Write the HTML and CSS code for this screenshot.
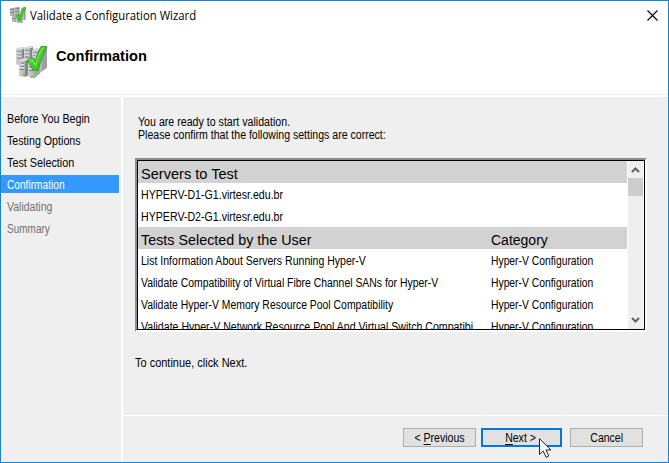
FILE: index.html
```html
<!DOCTYPE html>
<html lang="en">
<head>
<meta charset="utf-8">
<title>Validate a Configuration Wizard</title>
<link rel="stylesheet" href="styles.css">
</head>
<body>
<svg width="0" height="0" class="defs" aria-hidden="true">
  <defs>
    <linearGradient id="metal" x1="0" x2="1"><stop offset="0" stop-color="#cfd1d3"/><stop offset="1" stop-color="#a2a4a7"/></linearGradient>
    <linearGradient id="leaf" x1="0" y1="0" x2="1" y2="1"><stop offset="0" stop-color="#66dc42"/><stop offset="1" stop-color="#30b81f"/></linearGradient>
    <g id="tower">
      <path d="M0 2L5 0L9 1V16L6 18L0 17Z" fill="url(#metal)"/>
      <path d="M6 2.500L9 1V16L6 18Z" fill="#85888b"/>
      <path d="M0 2L4 0L9 1L6 2.500Z" fill="#dddfe0"/>
      <path d="M1 4.500L5 5M1 7.500L5 8M1 10.500L5 11" stroke="#74777a" stroke-width=".9"/>
      <path d="M1 5.500L5 6M1 8.500L5 9" stroke="#f4f5f6" stroke-width=".9"/>
    </g>
    <symbol id="servers" viewBox="0 0 32 32" preserveAspectRatio="none">
      <use href="#tower" x="1" y="1"/><use href="#tower" x="9" y="0"/><use href="#tower" x="17" y="2"/>
      <path d="M24 4L32 1V21L24 27Z" fill="#b5b7b9"/>
      <path d="M27 3L32 1V21L27 24Z" fill="#9c9fa2"/>
      <use href="#tower" x="4" y="12"/><use href="#tower" x="13" y="13"/>
      <path d="M19 16L25 13V27L19 31Z" fill="#a4a7ab"/>
      <path d="M8 28h2M16 30h2M23 24h2" stroke="#67d72c" stroke-width="2"/>
      <path d="M12.500 14L17.500 11L20.500 15.500Q22.500 6 26 .5H32Q26.500 10 23 23.500H18Z" fill="url(#leaf)" stroke="#249a16" stroke-width=".8"/>
      <path d="M14.500 14.200L17 13L20.500 18.500Q23.500 8 27.500 2" fill="none" stroke="#8aea68" stroke-width="1"/>
    </symbol>
    <symbol id="servers-small" viewBox="0 0 16 17">
      <path d="M0 1H4V9H0ZM5 0H9V9H5ZM11 1H15V13H11ZM2 9H6V15H2ZM7 9H12V16H7Z" fill="#b6b8ba"/>
      <path d="M4 1V9M9 0V9M15 1V13M6 10V15M12 13V16" stroke="#7f8285"/>
      <path d="M0 2.500H4M5 1.500H9M0 5.500H4M5 4.500H9M2 11.500H5M8 13.500H11" stroke="#777a7d" stroke-width=".8"/>
      <path d="M5.500 8.500L8 7L9.500 9.300Q11 4 13.500 .5H16Q12.500 5.500 10.800 13H8.800Z" fill="#42ce2a" stroke="#239c17" stroke-width=".6"/>
    </symbol>
  </defs>
</svg>
<div class="window">
  <header class="top">
    <div class="titlebar">
      <svg class="app-icon"><use href="#servers-small"/></svg>
      <div class="caption"><span>Validate a Configuration Wizard</span></div>
      <svg class="close" viewBox="0 0 11 11"><path d="M.5 .5L10.500 10.500M10.500 .5L.5 10.500"/></svg>
    </div>
    <div class="heading">
      <svg class="page-icon"><use href="#servers"/></svg>
      <h1><span>Confirmation</span></h1>
    </div>
  </header>
  <div class="body">
    <nav class="steps">
      <div class="step"><span class="s1">Before You Begin</span></div>
      <div class="step"><span class="s2">Testing Options</span></div>
      <div class="step"><span class="s3">Test Selection</span></div>
      <div class="step current"><span class="s4">Confirmation</span></div>
      <div class="step pending"><span class="s5">Validating</span></div>
      <div class="step pending"><span class="s6">Summary</span></div>
    </nav>
    <div class="main">
      <section class="content">
        <p class="intro"><span class="i1">You are ready to start validation.</span><br><span class="i2">Please confirm that the following settings are correct:</span></p>
        <div class="listbox">
          <div class="rows">
            <div class="row group"><div><span class="g1">Servers to Test</span></div></div>
            <div class="row"><div><span class="h">HYPERV-D1-G1.virtesr.edu.br</span></div></div>
            <div class="row"><div><span class="h">HYPERV-D2-G1.virtesr.edu.br</span></div></div>
            <div class="row group"><div><span class="g2">Tests Selected by the User</span></div><div><span class="g3">Category</span></div></div>
            <div class="row"><div><span class="t1">List Information About Servers Running Hyper-V</span></div><div><span class="c">Hyper-V Configuration</span></div></div>
            <div class="row"><div><span class="t2">Validate Compatibility of Virtual Fibre Channel SANs for Hyper-V</span></div><div><span class="c">Hyper-V Configuration</span></div></div>
            <div class="row"><div><span class="t3">Validate Hyper-V Memory Resource Pool Compatibility</span></div><div><span class="c">Hyper-V Configuration</span></div></div>
            <div class="row"><div><span class="t4">Validate Hyper-V Network Resource Pool And Virtual Switch Compatibi</span></div><div><span class="c">Hyper-V Configuration</span></div></div>
          </div>
          <div class="scrollbar">
            <svg class="arrow" viewBox="0 0 15 17"><path d="M4 11L7.500 7.500L11 11"/></svg>
            <div class="thumb"></div>
            <svg class="arrow down" viewBox="0 0 15 17"><path d="M4 6L7.500 9.500L11 6"/></svg>
          </div>
        </div>
        <p class="hint"><span>To continue, click Next.</span></p>
      </section>
      <footer class="buttons">
        <button class="btn"><span>&lt; <u>P</u>revious</span></button>
        <button class="btn next"><span><u>N</u>ext &gt;</span></button>
        <button class="btn cancel"><span>Cancel</span></button>
      </footer>
    </div>
  </div>
  <svg class="cursor" viewBox="0 0 13 20"><path d="M.5 .7V16.500L4.200 13L7.200 19.300L9.800 18L7 12H12Z"/></svg>
</div>
</body>
</html>
```
FILE: styles.css
```css
* { box-sizing: border-box; }
body { margin: 0; overflow: hidden; font: 12px/13px "Liberation Sans", Arial, sans-serif; color: #000; }
.defs { position: absolute; }
.window { position: relative; width: 669px; height: 463px; border: 1px solid #1883cb; background: #fff; display: flex; flex-direction: column; }
/* Narrow interface lettering */
span { display: inline-block; transform-origin: 0 50%; transform: scaleX(.878); white-space: nowrap; }
.top { height: 94px; border-bottom: 1px solid #efefef; }
.titlebar { display: flex; align-items: center; height: 30px; padding: 0 10px 0 9px; }
.app-icon { width: 16px; height: 17px; margin-bottom: 2px; }
.caption { flex: 1; margin-left: 4px; font: 12px/16px "Open Sans", "Noto Sans", sans-serif; }
.caption span { transform: scaleX(.943); }
.close { width: 11px; height: 11px; stroke: #000; stroke-width: 1.1; margin-bottom: 2px; }
.heading { display: flex; padding: 15px 0 0 14px; }
.page-icon { width: 32px; height: 33px; }
h1 { margin: 0 0 0 9px; font-size: 14px; line-height: 20px; }
h1 span { transform: scaleX(1.043); }
.body { flex: 1; display: flex; margin-top: 2px; min-height: 0; }
.steps { width: 122px; border-right: 2px solid #fff; background: #efefef; padding-top: 12px; }
.step { width: 118px; height: 18px; margin-bottom: 4px; padding-left: 6px; line-height: 20px; }
.s1 { transform: scaleX(.893); }
.s2 { transform: scaleX(.89); }
.s3 { transform: scaleX(.9); }
.s4 { transform: scaleX(.846); }
.s5 { transform: scaleX(.875); }
.s6 { transform: scaleX(.833); }
.current { background: #3399ff; color: #fff; }
.pending { color: #707070; }
.main { flex: 1; background: #efefef; display: flex; flex-direction: column; }
.content { height: 319px; border-bottom: 1px solid #fff; padding: 19px 0 0 12px; }
p { margin: 0; white-space: nowrap; }
.intro { padding-left: 3px; height: 42px; }
.i1 { transform: scaleX(.886); }
.i2 { transform: scaleX(.88); }
.listbox { width: 512px; height: 174px; border-style: solid; border-width: 2px; border-color: #8c8c8c #fff #fff #8c8c8c; outline: 1px solid #000; outline-offset: -3px; padding: 1px; display: flex; background: #fff; overflow: hidden; }
.rows { width: 489px; overflow: hidden; height: 168px; }
.row { display: grid; grid-template-columns: 350px 136px; height: 22px; padding-left: 3px; line-height: 25px; }
.group { background: #d2d2d2; font-size: 14px; line-height: 26px; }
.g1 { transform: scaleX(1.04); }
.g2 { transform: scaleX(1.024); }
.g3 { transform: none; }
.t2, .t3 { transform: scaleX(.868); }
.t4 { transform: scaleX(.882); }
.c { transform: scaleX(.861); }
.h { transform: scaleX(.885); }
.scrollbar { width: 15px; height: 168px; margin-left: 1px; background: #efefef; display: flex; flex-direction: column; }
.arrow { width: 15px; height: 17px; fill: none; stroke: #606060; stroke-width: 2; }
.thumb { height: 18px; background: #cdcdcd; }
.down { margin-top: auto; }
.hint { margin-top: 25px; }
.hint span { transform: scaleX(.915); }
.buttons { display: flex; padding: 12px 0 0 280px; }
.btn { width: 73px; height: 19px; padding: 1px 0 0; border: 1px solid #adadad; background: #e1e1e1; font: inherit; line-height: 17px; color: #000; white-space: nowrap; }
.btn span { transform-origin: 50% 50%; }
.next { width: 81px; margin-left: 5px; padding-right: 2px; border: 2px solid #0078d7; line-height: 15px; }
.cancel { margin-left: 8px; }
u { text-underline-offset: 2px; }
.cursor { position: absolute; left: 538px; top: 437px; width: 13px; height: 20px; fill: #fff; stroke: #222; stroke-width: 1; }
```
